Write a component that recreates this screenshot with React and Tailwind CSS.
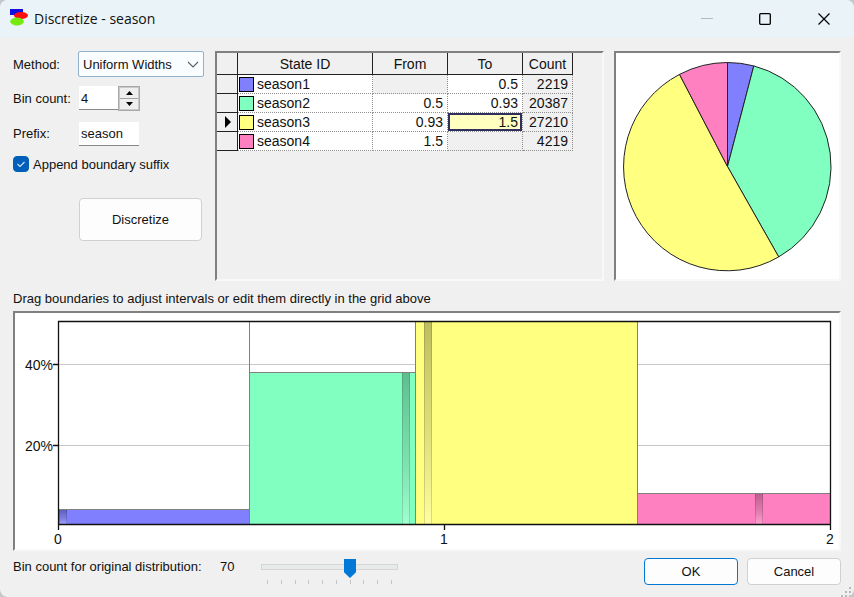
import { useState } from "react";

const STATES = [
  { id: "season1", swatch: "bg-[#8080ff]", from: "", to: "0.5", count: 2219 },
  { id: "season2", swatch: "bg-[#80ffc0]", from: "0.5", to: "0.93", count: 20387 },
  { id: "season3", swatch: "bg-[#ffff80]", from: "0.93", to: "1.5", count: 27210 },
  { id: "season4", swatch: "bg-[#ff80c0]", from: "1.5", to: "", count: 4219 },
];

const SUNKEN =
  "border-2 border-t-[#808080] border-l-[#808080] border-r-[#f8f8f8] border-b-[#f8f8f8]";
const BUTTON = "rounded border bg-[#fdfdfd] text-center";

function AppIcon() {
  return (
    <svg width="20" height="19" viewBox="0 0 20 19" aria-hidden="true">
      <path d="M2 0h13v6H2z" fill="#1010e0" />
      <ellipse cx="13" cy="6.500" rx="7" ry="3.500" fill="#fa1010" />
      <ellipse cx="9" cy="12.500" rx="6.800" ry="4" fill="#74ea10" />
    </svg>
  );
}

function TitleBar() {
  return (
    <header className="flex h-[37px] items-center justify-between bg-[#eaf4f8] pl-2">
      <div className="flex items-center gap-[6px]">
        <AppIcon />
        <h1 className="font-['Open_Sans',sans-serif] text-sm text-[#111]">Discretize - season</h1>
      </div>
      <div className="flex h-full">
        <button type="button" aria-label="Minimize" disabled className="grid w-[58px] place-items-center">
          <svg width="12" height="12" viewBox="0 0 12 12"><path d="M0 5.5h12" stroke="#b4bcc0" /></svg>
        </button>
        <button type="button" aria-label="Maximize" className="grid w-[58px] place-items-center">
          <svg width="12" height="12" viewBox="0 0 12 12">
            <rect x=".7" y=".7" width="10.6" height="10.6" rx="1" fill="none" stroke="#000" strokeWidth="1.3" />
          </svg>
        </button>
        <button type="button" aria-label="Close" className="grid w-[60px] place-items-center">
          <svg width="12" height="12" viewBox="0 0 12 12">
            <path d="M.5.5l11 11M11.5.5l-11 11" stroke="#000" strokeWidth="1.2" />
          </svg>
        </button>
      </div>
    </header>
  );
}

function Settings() {
  const [bins, setBins] = useState(4);
  return (
    <form className="flex w-[202px] shrink-0 flex-col">
      <div className="flex h-[26px] items-center">
        <label htmlFor="method" className="w-[65px] pt-px">Method:</label>
        <div className="relative">
          <select
            id="method"
            className="h-[26px] w-[126px] appearance-none rounded-xs border border-[#92b2cc] bg-[#fafdff] pt-px pl-1"
          >
            <option>Uniform Widths</option>
            <option>Uniform Counts</option>
          </select>
          <svg className="pointer-events-none absolute top-[10px] right-[5px]" width="12" height="7" viewBox="0 0 12 7" aria-hidden="true">
            <path d="M1 1l5 5 5-5" fill="none" stroke="#5c6064" strokeWidth="1.1" />
          </svg>
        </div>
      </div>

      <div className="mt-[9px] flex h-6 items-center">
        <label htmlFor="bins" className="w-[66px] pt-px">Bin count:</label>
        <input
          id="bins"
          value={bins}
          onChange={(e) => setBins(Number(e.target.value) || 0)}
          className="h-6 w-[39px] border-b border-[#888] bg-white px-[2px] pt-px"
        />
        <div className="flex h-[25px] w-[22px] flex-col border border-[#a8a8a8] bg-[#c8c8c8] p-px">
          <button type="button" aria-label="More bins" onClick={() => setBins(bins + 1)} className="grid flex-1 place-items-center border-b border-[#a0a0a0] bg-[#eee]">
            <svg width="7" height="4" viewBox="0 0 7 4"><path d="M0 4h7L3.500 0z" /></svg>
          </button>
          <button type="button" aria-label="Fewer bins" onClick={() => setBins(bins - 1)} className="grid flex-1 place-items-center bg-[#eee]">
            <svg width="7" height="4" viewBox="0 0 7 4"><path d="M0 0h7L3.500 4z" /></svg>
          </button>
        </div>
      </div>

      <div className="mt-3 flex h-6 items-center">
        <label htmlFor="prefix" className="w-[66px]">Prefix:</label>
        <input id="prefix" defaultValue="season" className="h-6 w-[60px] border-b border-[#888] bg-white px-[2px]" />
      </div>

      <div className="mt-2 flex h-5 items-center gap-1">
        <div className="relative size-4">
          <input id="suffix" type="checkbox" defaultChecked className="peer block size-4 appearance-none rounded border border-[#005fb8] checked:bg-[#005fb8]" />
          <svg className="pointer-events-none absolute inset-0 hidden peer-checked:block" width="16" height="16" viewBox="0 0 16 16" aria-hidden="true">
            <path d="M4.500 8l2.500 2.500 4.500-4.500" fill="none" stroke="#d8e8f6" strokeWidth="1.1" />
          </svg>
        </div>
        <label htmlFor="suffix" className="pt-px">Append boundary suffix</label>
      </div>

      <button type="button" className={`${BUTTON} mt-6 ml-[66px] h-[43px] w-[123px] border-[#d0d0d0]`}>
        Discretize
      </button>
    </form>
  );
}

function StateTable() {
  const head = "h-[22px] border-r border-b border-[#222] bg-[#f0f0f0] p-0 font-normal";
  const cell = "h-[19px] border-r border-b border-dotted border-[#909090] p-0";
  return (
    <div className={`${SUNKEN} min-w-0 flex-1 overflow-auto`}>
      <table className="table-fixed border-separate border-spacing-0 text-sm leading-4">
        <thead>
          <tr>
            <th className={`${head} w-[21px]`} aria-label="Current row" />
            <th className={`${head} w-[135px]`}>State ID</th>
            <th className={`${head} w-[75px]`}>From</th>
            <th className={`${head} w-[75px]`}>To</th>
            <th className={`${head} w-[50px]`}>Count</th>
          </tr>
        </thead>
        <tbody>
          {STATES.map((s) => {
            const current = s.id === "season3";
            return (
              <tr key={s.id} className="text-right">
                <td className="border-r border-b border-[#222] p-0">
                  {current && (
                    <svg className="ml-2" width="7" height="12" viewBox="0 0 7 12" aria-hidden="true">
                      <path d="M0 0v12l6-6z" />
                    </svg>
                  )}
                </td>
                <td className={`${cell} bg-white`}>
                  <div className="flex items-center gap-[3px] pl-px">
                    <span className={`${s.swatch} size-[15px] border border-black`} />
                    {s.id}
                  </div>
                </td>
                <td className={`${cell} ${s.from ? "bg-white" : ""} pr-1`}>{s.from}</td>
                <td className={`${cell} ${s.to ? "bg-white" : ""}`}>
                  <div
                    className={
                      current
                        ? "h-[18px] border-2 border-[#303060] bg-[#ffffc0] pr-[2px] leading-[14px]"
                        : "pr-1"
                    }
                  >
                    {s.to}
                  </div>
                </td>
                <td className={`${cell} pr-1`}>{s.count}</td>
              </tr>
            );
          })}
        </tbody>
      </table>
    </div>
  );
}

function Pie() {
  return (
    <div className={`${SUNKEN} w-[227px] shrink-0 bg-white`}>
      <svg className="block w-full" viewBox="0 0 223 226" role="img" aria-label="Share of each state">
        <g stroke="#222" strokeWidth="1" strokeLinejoin="round">
          <path d="M111.500 113.500V9.500A103.500 104 0 0 1 137.800 12.900z" fill="#8080ff" />
          <path d="M111.500 113.500L137.800 12.900A103.500 104 0 0 1 162.700 203.900z" fill="#80ffc0" />
          <path d="M111.500 113.500L162.700 203.900A103.500 104 0 1 1 63.500 21.400z" fill="#ffff80" />
          <path d="M111.500 113.500L63.500 21.400A103.500 104 0 0 1 111.500 9.500z" fill="#ff80c0" />
        </g>
      </svg>
    </div>
  );
}

const BARS = [
  { x: 43, w: 191, y: 196, fill: "#8080ff", mark: 44 },
  { x: 234, w: 166, y: 59, fill: "#80ffc0", mark: 387 },
  { x: 400, w: 222, y: 8, fill: "#ffff80", mark: 409 },
  { x: 622, w: 193, y: 180, fill: "#ff80c0", mark: 740 },
];

function Histogram() {
  return (
    <div className={`${SUNKEN} bg-white`}>
      <svg className="block w-full" viewBox="0 0 824 236" role="img" aria-label="Distribution with interval boundaries">
        <defs>
          <linearGradient id="shade" x1="0" y1="0" x2="0" y2="1">
            <stop offset="0" stopColor="#000" stopOpacity=".26" />
            <stop offset=".5" stopColor="#555" stopOpacity=".2" />
            <stop offset="1" stopColor="#fff" stopOpacity=".25" />
          </linearGradient>
        </defs>
        <path d="M43 51.500H815M43 132.500H815" stroke="#c8c8c8" />
        {BARS.map((b) => (
          <g key={b.x}>
            <rect x={b.x + 0.5} y={b.y + 0.5} width={b.w} height={211 - b.y} fill={b.fill} stroke="#808080" />
            <rect x={b.mark} y={b.y + 1} width="8" height={210 - b.y} fill="url(#shade)" />
            <path d={`M${b.mark + 0.5} ${b.y + 1}V211M${b.mark + 7.5} ${b.y + 1}V211`} stroke="#000" strokeOpacity=".14" />
          </g>
        ))}
        <path d="M234.500 9V211M400.500 9V211M622.500 9V211" stroke="#808080" />
        <path
          d="M43.500 8.500H815.500V211.500H43.500zM38 51.500h5M38 132.500h5M43.500 211v6M429.500 211v6M815.500 211v6"
          fill="none"
          stroke="#111"
          strokeWidth="1.3"
        />
        <g className="text-sm" fill="#111">
          <text x="38" y="57" textAnchor="end">40%</text>
          <text x="38" y="138" textAnchor="end">20%</text>
          <text x="43" y="231" textAnchor="middle">0</text>
          <text x="429" y="231" textAnchor="middle">1</text>
          <text x="815" y="231" textAnchor="middle">2</text>
        </g>
      </svg>
    </div>
  );
}

function Footer() {
  const [count, setCount] = useState(70);
  return (
    <footer className="flex items-start justify-between pt-[7px]">
      <div className="flex">
        <label htmlFor="count" className="w-[207px] leading-[18px]">
          Bin count for original distribution:
        </label>
        <output htmlFor="count" className="w-[41px] leading-[18px]">{count}</output>
        <div className="w-[137px]">
          <input
            id="count"
            type="range"
            min="10"
            max="100"
            value={count}
            onChange={(e) => setCount(Number(e.target.value))}
            className="block h-[18px] w-full appearance-none bg-transparent [&::-webkit-slider-runnable-track]:h-[6px] [&::-webkit-slider-runnable-track]:border [&::-webkit-slider-runnable-track]:border-[#d6d6d6] [&::-webkit-slider-runnable-track]:bg-[#e7eaea] [&::-webkit-slider-thumb]:-mt-[6px] [&::-webkit-slider-thumb]:h-[19px] [&::-webkit-slider-thumb]:w-3 [&::-webkit-slider-thumb]:appearance-none [&::-webkit-slider-thumb]:bg-[#0078d7] [&::-webkit-slider-thumb]:[clip-path:polygon(0_0,100%_0,100%_70%,50%_100%,0_70%)]"
          />
          <div className="mt-1 flex justify-between px-[6px]" aria-hidden="true">
            {Array.from({ length: 10 }, (_, i) => (
              <span key={i} className="h-1 w-px bg-[#c4c4c4]" />
            ))}
          </div>
        </div>
      </div>
      <div className="flex gap-[9px]">
        <button type="button" className={`${BUTTON} h-[27px] w-[94px] border-[#0078d4] pt-px`}>OK</button>
        <button type="button" className={`${BUTTON} h-[27px] w-[94px] border-[#d0d0d0] pt-px`}>Cancel</button>
      </div>
    </footer>
  );
}

export default function App() {
  return (
    <div className="bg-[#c4c8ca]">
      <div className="relative flex min-h-screen flex-col overflow-hidden rounded-lg bg-[#f0f0f0] font-['Liberation_Sans',Arial,sans-serif] text-[13px] text-[#111]">
        <TitleBar />
        <main className="flex flex-col px-[13px] pt-[14px]">
          <div className="flex h-[230px]">
            <Settings />
            <div className="flex min-w-0 flex-1 gap-[10px]">
              <StateTable />
              <Pie />
            </div>
          </div>
          <p className="pt-[10px] pb-1 leading-4">Drag boundaries to adjust intervals or edit them directly in the grid above</p>
          <Histogram />
          <Footer />
        </main>
        <svg className="absolute right-px bottom-0" width="12" height="10" viewBox="0 0 12 10" aria-hidden="true">
          <path d="M8 0h2v2H8zM4 4h2v2H4zM8 4h2v2H8zM0 8h2v2H0zM4 8h2v2H4zM8 8h2v2H8z" fill="#b8b8b8" />
        </svg>
      </div>
    </div>
  );
}
